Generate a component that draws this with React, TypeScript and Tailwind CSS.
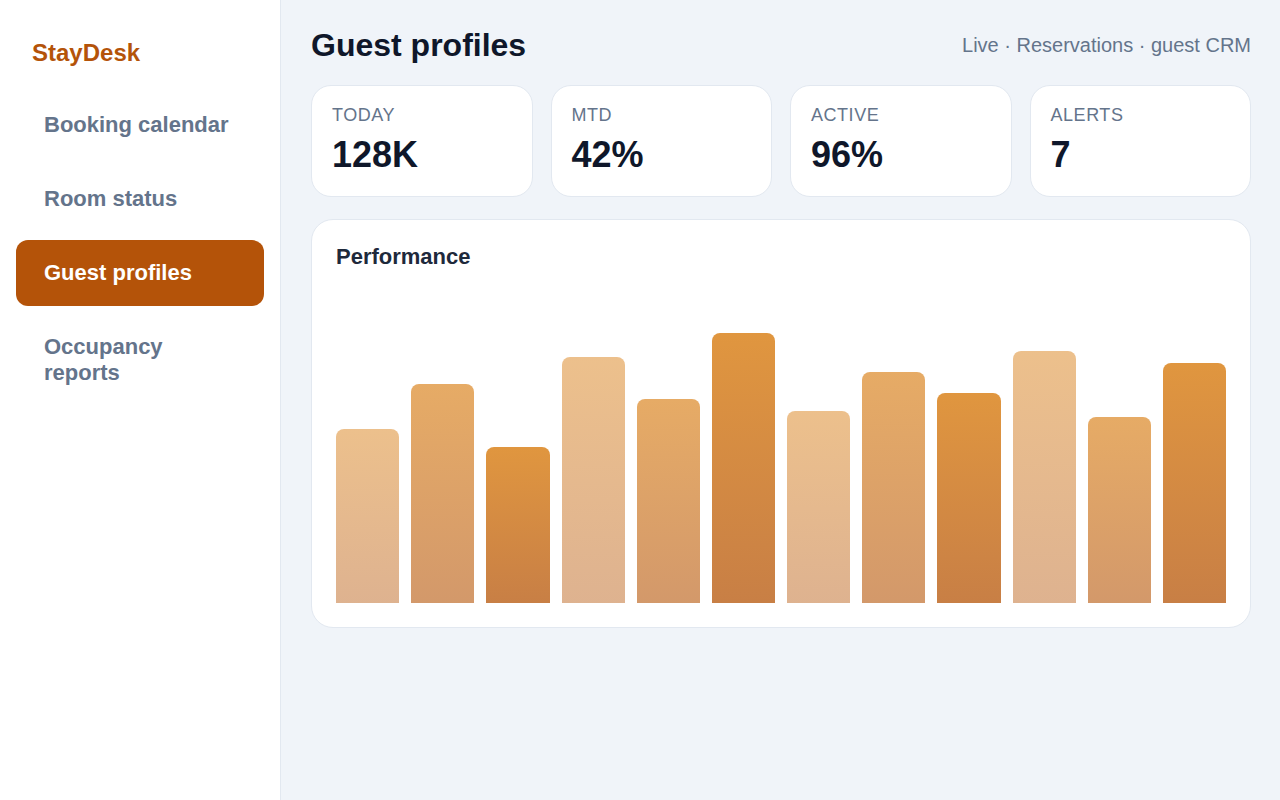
const nav = ["Booking calendar", "Room status", "Guest profiles", "Occupancy reports"];

const stats = [
  { label: "Today", value: "128K" },
  { label: "MTD", value: "42%" },
  { label: "Active", value: "96%" },
  { label: "Alerts", value: "7" },
];

const bars = [58, 73, 52, 82, 68, 90, 64, 77, 70, 84, 62, 80];
const tones = ["opacity-60", "opacity-80", "opacity-100"];

export default function App() {
  return (
    <div className="flex min-h-[800px] w-full bg-[#f0f4f9] font-['Liberation_Sans',Arial,sans-serif]">
      {/* Sidebar */}
      <aside className="flex w-[281px] shrink-0 flex-col border-r border-[#e2e8f0] bg-white px-4 pt-[39px]">
        <div className="px-4 text-[24px] font-bold leading-7 text-[#b45309]">StayDesk</div>
        <nav className="mt-[25px] flex w-[248px] flex-col gap-2">
          {nav.map((item) => (
            <div
              key={item}
              className={
                item === "Guest profiles"
                  ? "rounded-xl bg-[#b45309] py-5 pl-7 pr-[30px] text-[22px] font-bold leading-[26px] text-white"
                  : "rounded-xl py-5 pl-7 pr-[30px] text-[22px] font-bold leading-[26px] text-[#64748b]"
              }
            >
              {item}
            </div>
          ))}
        </nav>
      </aside>

      {/* Main */}
      <main className="flex-1 pl-[30px] pr-[29px] pt-[25px]">
        <div className="flex items-center justify-between">
          <h1 className="text-[32px] font-bold leading-10 text-[#0f172a]">Guest profiles</h1>
          <p className="text-[20px] text-[#64748b]">Live · Reservations · guest CRM</p>
        </div>

        <div className="mt-5 grid grid-cols-4 gap-[18px]">
          {stats.map((s) => (
            <div key={s.label} className="h-[112px] rounded-[20px] border border-[#e2e8f0] bg-white px-5 pt-[19px]">
              <p className="text-[18px] uppercase leading-5 tracking-[0.03em] text-[#64748b]">{s.label}</p>
              <p className="mt-[10px] text-[36px] font-bold leading-10 text-[#0f172a]">{s.value}</p>
            </div>
          ))}
        </div>

        <section className="mt-[22px] rounded-[22px] border border-[#e2e8f0] bg-white px-6 pb-6 pt-[23px]">
          <h2 className="text-[22px] font-bold leading-7 text-[#1e293b]">Performance</h2>
          <div className="mt-[32px] flex h-[300px] items-end gap-3">
            {bars.map((h, i) => (
              <div
                key={i}
                className={`flex-1 rounded-t-lg bg-gradient-to-b from-[#e0963f] to-[#c87f45] ${tones[i % 3]}`}
                style={{ height: `${h}%` }}
              />
            ))}
          </div>
        </section>
      </main>
    </div>
  );
}
